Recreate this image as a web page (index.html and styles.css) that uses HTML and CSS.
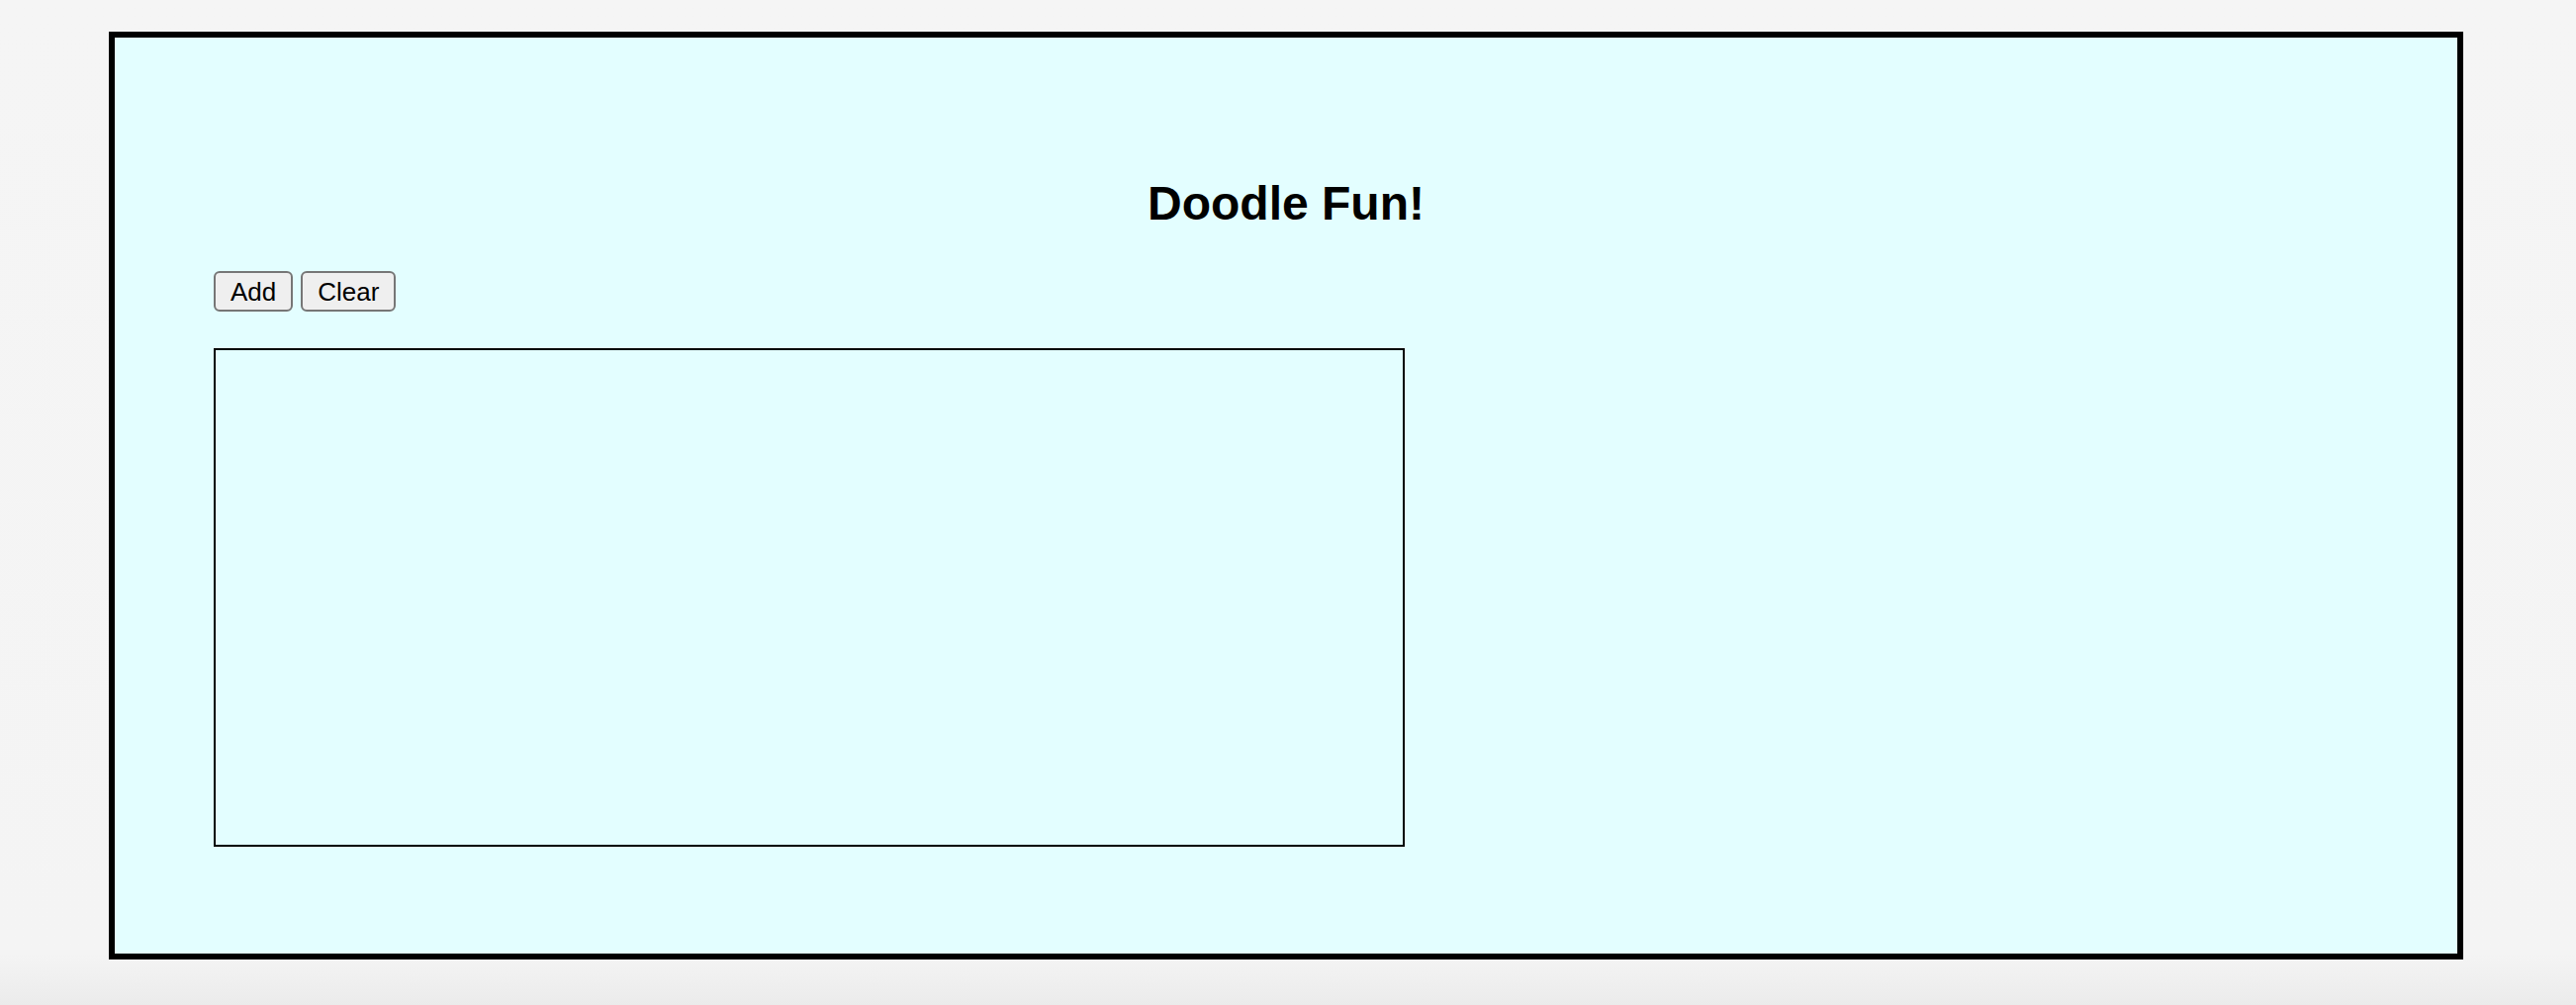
FILE: index.html
```html
<!DOCTYPE html>
<html lang="en">
<head>
<meta charset="utf-8">
<title>Doodle Fun!</title>
<link rel="stylesheet" href="styles.css">
</head>
<body>
<main class="frame">
  <h1 class="title">Doodle Fun!</h1>
  <div class="controls">
    <button class="btn" type="button">Add</button>
    <button class="btn" type="button">Clear</button>
  </div>
  <canvas class="board" width="1200" height="500"></canvas>
</main>
</body>
</html>
```

FILE: styles.css
```css
html {
  height: 100%;
  background: linear-gradient(to bottom, #f5f5f5 0, #f4f4f4 965px, #ebebeb 1016px);
}
body {
  margin: 0;
  height: 100%;
  font-family: "Liberation Sans", Arial, sans-serif;
  color: #000;
}
.frame {
  box-sizing: border-box;
  width: 2380px;
  height: 938px;
  margin: 32px 0 0 110px;
  border: 6px solid #000;
  background: #e3feff;
  padding: 141px 100px 0;
}
.title {
  margin: 0;
  font-size: 48px;
  font-weight: 700;
  line-height: 54px;
  text-align: center;
}
.controls {
  display: flex;
  gap: 8px;
  margin-top: 41px;
}
.btn {
  box-sizing: border-box;
  height: 41px;
  padding: 0 15px;
  font-family: "Liberation Sans", Arial, sans-serif;
  font-size: 26px;
  line-height: 30px;
  color: #000;
  background: #efefef;
  border: 2px solid #767676;
  border-radius: 6px;
}
.board {
  display: block;
  margin-top: 37px;
  width: 1200px;
  height: 500px;
  border: 2px solid #000;
}
```
